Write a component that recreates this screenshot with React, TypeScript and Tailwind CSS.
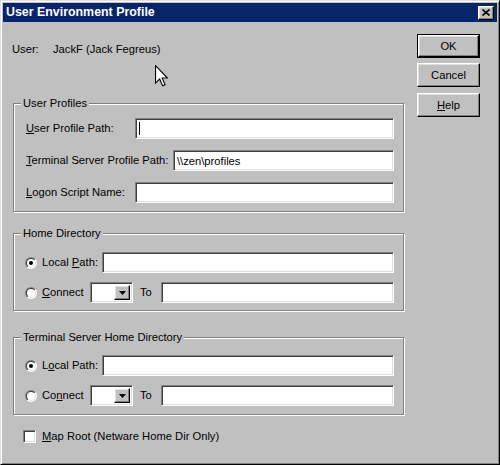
import React from "react";

// classic 3D edges
const sunken =
  "border border-t-[#808080] border-l-[#808080] border-b-white border-r-white shadow-[inset_1px_1px_0_#404040,inset_-1px_-1px_0_#dfdfdf] bg-white";
const raised =
  "border border-t-white border-l-white border-b-black border-r-black shadow-[inset_-1px_-1px_0_#808080,inset_1px_1px_0_#dfdfdf] bg-[#c0c0c0]";

function Group({
  title,
  children,
  className = "",
}: {
  title: string;
  children: React.ReactNode;
  className?: string;
}) {
  return (
    <div
      className={`ml-[10px] w-[391px] border border-[#808080] shadow-[inset_1px_1px_0_#fff,1px_1px_0_#fff] ${className}`}
    >
      <div className="-mt-[8px] ml-[7px] w-fit bg-[#c0c0c0] px-[2px] leading-[14px]">
        {title}
      </div>
      {children}
    </div>
  );
}

function TextBox({ children }: { children?: React.ReactNode }) {
  return (
    <div className={`${sunken} flex h-full flex-1 items-center pl-[3px] leading-[14px]`}>
      {children}
    </div>
  );
}

function Radio({ checked }: { checked?: boolean }) {
  return (
    <svg width="12" height="12" viewBox="0 0 12 12" className="shrink-0">
      <defs>
        <linearGradient id="rOuter" x1="0" y1="0" x2="1" y2="1">
          <stop offset="0.5" stopColor="#808080" />
          <stop offset="0.5" stopColor="#ffffff" />
        </linearGradient>
        <linearGradient id="rInner" x1="0" y1="0" x2="1" y2="1">
          <stop offset="0.5" stopColor="#404040" />
          <stop offset="0.5" stopColor="#dfdfdf" />
        </linearGradient>
      </defs>
      <circle cx="6" cy="6" r="6" fill="url(#rOuter)" />
      <circle cx="6" cy="6" r="5" fill="url(#rInner)" />
      <circle cx="6" cy="6" r="4" fill="#fff" />
      {checked && <circle cx="6" cy="6" r="2" fill="#000" />}
    </svg>
  );
}

function Dropdown() {
  return (
    <div className={`${sunken} flex h-full w-[43px] p-[2px]`}>
      <div className="flex-1 bg-white" />
      <div className={`${raised} flex w-[16px] items-center justify-center`}>
        <svg width="7" height="4" viewBox="0 0 7 4">
          <path d="M0 0 H7 L3.5 4 Z" fill="#000" />
        </svg>
      </div>
    </div>
  );
}

function DirRows({ localKey, connectKey }: { localKey: React.ReactNode; connectKey: React.ReactNode }) {
  return (
    <>
      <div className="flex h-[21px] items-center">
        <Radio checked />
        <div className="ml-[5px] w-[60px] whitespace-nowrap">{localKey}</div>
        <TextBox />
      </div>
      <div className="flex h-[21px] items-center">
        <Radio />
        <div className="ml-[5px] w-[48px] whitespace-nowrap">{connectKey}</div>
        <Dropdown />
        <div className="ml-[7px] w-[21px]">To</div>
        <TextBox />
      </div>
    </>
  );
}

function Btn({ children, isDefault }: { children: React.ReactNode; isDefault?: boolean }) {
  const inner = (
    <div className={`${raised} flex h-full w-full items-center justify-center`}>{children}</div>
  );
  return isDefault ? (
    <div className="h-[24px] w-[63px] border border-black">{inner}</div>
  ) : (
    <div className="h-[24px] w-[63px]">{inner}</div>
  );
}

export default function App() {
  return (
    <div className="relative h-[465px] w-[500px] border border-t-[#dfdfdf] border-l-[#dfdfdf] border-b-black border-r-black bg-[#c0c0c0] p-[2px] font-['Liberation_Sans',Arial,sans-serif] text-[11.2px] text-black shadow-[inset_1px_1px_0_#fff,inset_-1px_-1px_0_#808080]">
      {/* title bar */}
      <div className="flex h-[19px] items-center justify-between bg-[#0a246a] pl-[3px] pr-[3px]">
        <span className="text-[12.4px] font-bold leading-none text-white">User Environment Profile</span>
        <div className={`${raised} flex h-[14px] w-[16px] items-center justify-center`}>
          <svg width="8" height="7" viewBox="0 0 8 7">
            <path d="M0.5 0.5 L7.5 6.5 M7.5 0.5 L0.5 6.5" stroke="#000" strokeWidth="1.6" />
          </svg>
        </div>
      </div>

      <div className="flex">
        {/* left column */}
        <div className="flex w-[401px] flex-col">
          <div className="mt-[20px] flex pl-[9px] leading-[14px]">
            <span className="w-[41px]">User:</span>
            <span>JackF (Jack Fegreus)</span>
          </div>

          <Group title="User Profiles" className="mt-[47px]">
            <div className="mt-[8px] flex flex-col gap-[11px] pb-[8px] pl-[12px] pr-[9px]">
              <div className="flex h-[21px] items-center">
                <div className="w-[109px] whitespace-nowrap">
                  <u>U</u>ser Profile Path:
                </div>
                <TextBox>
                  <div className="h-[13px] w-px bg-black" />
                </TextBox>
              </div>
              <div className="flex h-[21px] items-center">
                <div className="w-[147px] whitespace-nowrap">
                  <u>T</u>erminal Server Profile Path:
                </div>
                <TextBox>{"\\\\zen\\profiles"}</TextBox>
              </div>
              <div className="flex h-[21px] items-center">
                <div className="w-[109px] whitespace-nowrap">
                  <u>L</u>ogon Script Name:
                </div>
                <TextBox />
              </div>
            </div>
          </Group>

          <Group title="Home Directory" className="mt-[21px]">
            <div className="mt-[12px] flex flex-col gap-[9px] pb-[7px] pl-[11px] pr-[9px]">
              <DirRows
                localKey={
                  <>
                    Local <u>P</u>ath:
                  </>
                }
                connectKey={
                  <>
                    <u>C</u>onnect
                  </>
                }
              />
            </div>
          </Group>

          <Group title="Terminal Server Home Directory" className="mt-[26px]">
            <div className="mt-[11px] flex flex-col gap-[9px] pb-[8px] pl-[11px] pr-[9px]">
              <DirRows
                localKey={
                  <>
                    L<u>o</u>cal Path:
                  </>
                }
                connectKey={
                  <>
                    Co<u>n</u>nect
                  </>
                }
              />
            </div>
          </Group>

          <div className="mt-[14px] flex h-[14px] items-center pl-[20px]">
            <div className={`${sunken} h-[13px] w-[13px]`} />
            <span className="ml-[6px] leading-[14px]">
              <u>M</u>ap Root (Netware Home Dir Only)
            </span>
          </div>
        </div>

        {/* buttons */}
        <div className="ml-[13px] mt-[12px] flex w-[63px] flex-col">
          <Btn isDefault>OK</Btn>
          <div className="mt-[5px]">
            <Btn>Cancel</Btn>
          </div>
          <div className="mt-[6px]">
            <Btn>
              <span>
                <u>H</u>elp
              </span>
            </Btn>
          </div>
        </div>
      </div>

      {/* mouse pointer */}
      <svg
        className="absolute left-[154px] top-[64px]"
        width="13"
        height="22"
        viewBox="0 0 12 20"
      >
        <path
          d="M0.5 0.5 L0.5 16.5 L4.3 12.8 L7 19 L9.3 18 L6.6 11.9 L11.5 11.9 Z"
          fill="#fff"
          stroke="#000"
          strokeWidth="1"
          strokeLinejoin="miter"
        />
      </svg>
    </div>
  );
}
